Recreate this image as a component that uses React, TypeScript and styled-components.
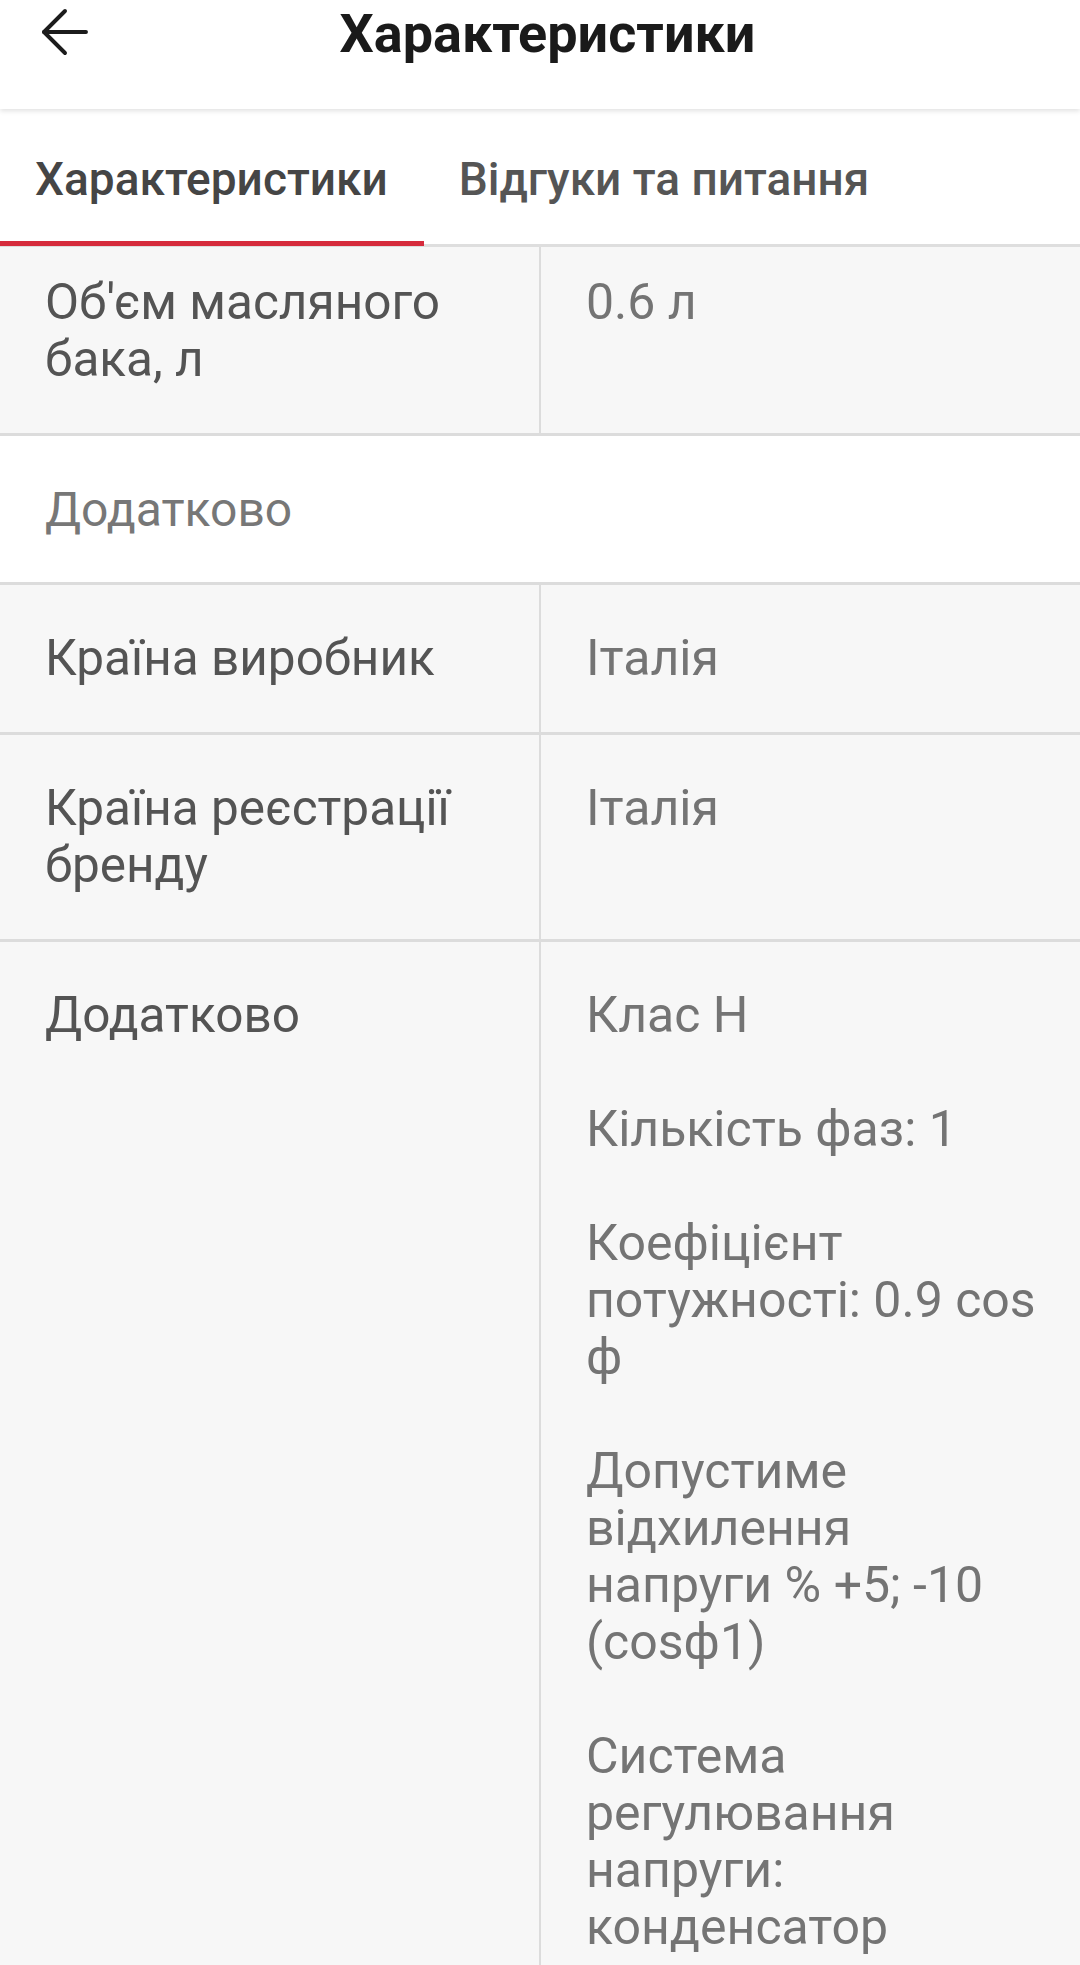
import React from 'react';
import styled, {createGlobalStyle} from 'styled-components';
import {ArrowLeft} from 'lucide-react';

const GlobalStyle = createGlobalStyle`
    html, body {
        margin: 0;
        padding: 0;
        background: #ffffff;
        overflow: hidden;
    }
    body {
        font-family: Roboto, "Liberation Sans", Arial, sans-serif;
    }
`;

interface Spec {
    label: string;
    values: string[];
}

const mainSpecs: Spec[] = [
    {label: "Об'єм масляного бака, л", values: ['0.6 л']},
];

const extraSpecs: Spec[] = [
    {label: 'Країна виробник', values: ['Італія']},
    {label: 'Країна реєстрації бренду', values: ['Італія']},
    {
        label: 'Додатково',
        values: [
            'Клас Н',
            'Кількість фаз: 1',
            'Коефіцієнт потужності: 0.9 cos ф',
            'Допустиме відхилення напруги % +5; -10 (cosф1)',
            'Система регулювання напруги: конденсатор',
        ],
    },
];

const tabs = ['Характеристики', 'Відгуки та питання'];

const SpecRow = ({label, values, clipped}: Spec & { clipped?: boolean }) => (
    <Row $clipped={clipped}>
        <Label>{label}</Label>
        <ValueCell>
            {values.map(v => <Value key={v}>{v}</Value>)}
        </ValueCell>
    </Row>
);

const App = () => {
    return (
        <>
            <GlobalStyle/>
            <Page>
                <Header>
                    <BackButton aria-label="back">
                        <ArrowLeft size={72} strokeWidth={1.3} color="#1c1c1c"/>
                    </BackButton>
                    <Title>Характеристики</Title>
                </Header>
                <TabBar>
                    {tabs.map((t, i) => (
                        <Tab key={t} $active={i === 0}>{t}</Tab>
                    ))}
                </TabBar>
                <Table>
                    {mainSpecs.map((s, i) => (
                        <SpecRow key={s.label} {...s} clipped={i === 0}/>
                    ))}
                    <Section>Додатково</Section>
                    {extraSpecs.map(s => (
                        <SpecRow key={s.label} {...s}/>
                    ))}
                </Table>
            </Page>
        </>
    );
};

export default App;

const Page = styled.div`
    width: 1080px;
    height: 1965px;
    overflow: hidden;
    background: #ffffff;
`;

const Header = styled.header`
    position: relative;
    z-index: 1;
    height: 109px;
    display: flex;
    align-items: flex-start;
    background: #ffffff;
    box-shadow: 0 2px 5px rgba(0, 0, 0, 0.12);
`;

const BackButton = styled.button`
    width: 110px;
    height: 64px;
    padding: 0 0 0 29px;
    border: none;
    background: none;
    display: flex;
    align-items: center;
`;

const Title = styled.h1`
    flex: 1;
    margin: 0 95px 0 0;
    text-align: center;
    font-weight: 700;
    font-size: 54px;
    line-height: 68px;
    color: #1a1a1a;
`;

const TabBar = styled.nav`
    display: flex;
    height: 135px;
    border-bottom: 3px solid #dedede;
    background: #ffffff;
`;

const Tab = styled.div<{ $active: boolean }>`
    display: flex;
    align-items: center;
    padding: 8px 36px 0 35px;
    font-size: 46px;
    font-weight: 500;
    color: ${p => p.$active ? '#454545' : '#555555'};
    border-bottom: 5px solid ${p => p.$active ? '#d62b3c' : 'transparent'};
    margin-bottom: -2px;
`;

const Table = styled.div`
    display: flex;
    flex-direction: column;
`;

const Row = styled.div<{ $clipped?: boolean }>`
    display: grid;
    grid-template-columns: 539px 1fr;
    background: #f7f7f7;
    border-bottom: 3px solid #dcdcdc;
    line-height: 57px;

    & > * {
        padding: ${p => p.$clipped ? '27px' : '45px'} 45px 45px;
    }
`;

const Label = styled.div`
    font-size: 49.5px;
    color: #545454;
`;

const ValueCell = styled.div`
    display: flex;
    flex-direction: column;
    gap: 57px;
    border-left: 2px solid #dcdcdc;
    padding-right: 40px !important;
`;

const Value = styled.div`
    font-size: 50px;
    color: #747474;
`;

const Section = styled.div`
    padding: 45px 45px 44px;
    font-size: 48px;
    line-height: 57px;
    color: #777777;
    background: #ffffff;
    border-bottom: 3px solid #dcdcdc;
`;
